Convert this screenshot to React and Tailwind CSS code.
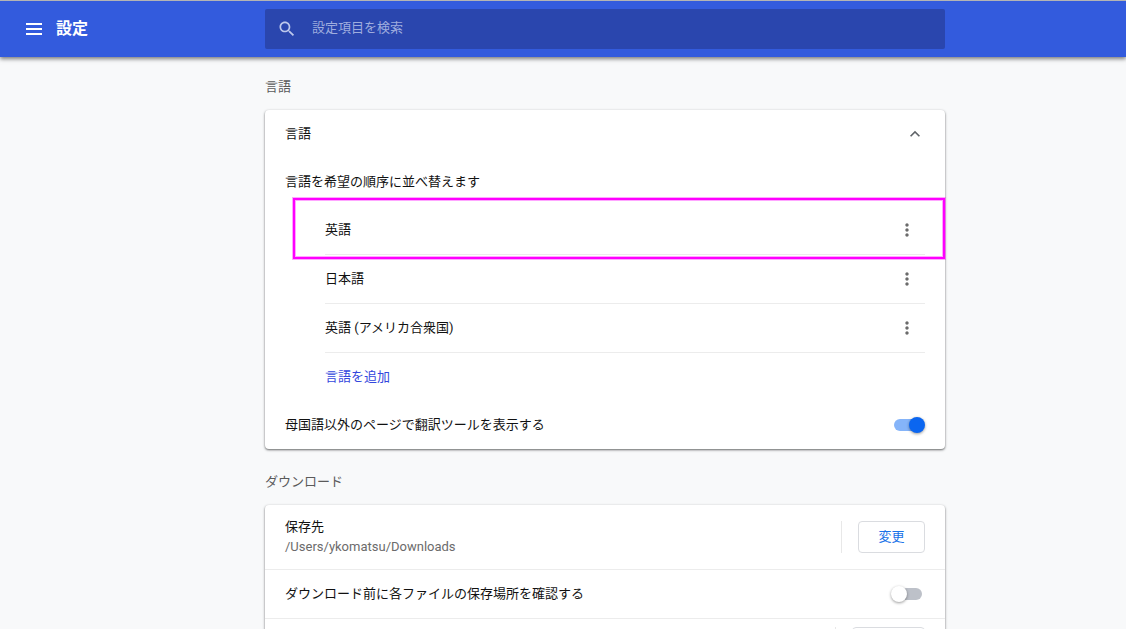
import { useState } from "react";
import clsx from "clsx";

const languages = [
    { id: "en", name: "英語", highlighted: true },
    { id: "ja", name: "日本語" },
    { id: "en-US", name: "英語 (アメリカ合衆国)" },
];

function MenuIcon() {
    return <svg viewBox="0 0 24 24" className="size-6" fill="currentColor" aria-hidden="true">
        <path d="M3 18h16v-2H3v2zm0-5h16v-2H3v2zm0-7v2h16V6H3z" />
    </svg>
}

function SearchIcon() {
    return <svg viewBox="0 0 24 24" className="size-5 shrink-0" fill="currentColor" aria-hidden="true">
        <path d="M15.5 14h-.79l-.28-.27C15.41 12.59 16 11.11 16 9.5 16 5.91 13.09 3 9.5 3S3 5.91 3 9.5 5.91 16 9.5 16c1.61 0 3.09-.59 4.23-1.57l.27.28v.79l5 4.99L20.49 19l-4.99-5zm-6 0C7.01 14 5 11.99 5 9.5S7.01 5 9.5 5 14 7.01 14 9.5 11.99 14 9.5 14z" />
    </svg>
}

function ChevronUpIcon() {
    return <svg viewBox="0 0 24 24" className="size-5" fill="currentColor" aria-hidden="true">
        <path d="M12 8l-6 6 1.41 1.41L12 10.83l4.59 4.58L18 14z" />
    </svg>
}

function MoreIcon() {
    return <svg viewBox="0 0 24 24" className="size-5" fill="currentColor" aria-hidden="true">
        <path d="M12 8c1.1 0 2-.9 2-2s-.9-2-2-2-2 .9-2 2 .9 2 2 2zm0 2c-1.1 0-2 .9-2 2s.9 2 2 2 2-.9 2-2-.9-2-2-2zm0 6c-1.1 0-2 .9-2 2s.9 2 2 2 2-.9 2-2-.9-2-2-2z" />
    </svg>
}

function Toggle({ id, checked, onChange }) {
    return <input
        id={id}
        type="checkbox"
        role="switch"
        checked={checked}
        onChange={(e) => onChange(e.target.checked)}
        className={clsx(
            "relative mr-[3px] h-3 w-7 shrink-0 cursor-pointer appearance-none rounded-full",
            "before:absolute before:-top-0.5 before:size-4 before:rounded-full before:shadow-[0_1px_3px_rgba(0,0,0,0.4)]",
            checked ? "bg-[#85b4f9] before:-right-[3px] before:bg-[#0b66f0]" : "bg-[#bdc1c9] before:-left-[3px] before:bg-white"
        )}
    />
}

function Section({ title, children }) {
    return <section>
        <h2 className="pb-[13px] text-[13px] leading-5 text-[#5a5a5a]">{title}</h2>
        <div className="rounded-sm bg-white shadow-[0_1px_3px_rgba(60,64,67,0.3),0_1px_2px_rgba(0,0,0,0.45)]">
            {children}
        </div>
    </section>
}

export default function App() {
    const [query, setQuery] = useState("");
    const [translate, setTranslate] = useState(true);
    const [askLocation, setAskLocation] = useState(false);

    return <div className="flex h-screen flex-col overflow-hidden bg-[#f8f9fa] font-[Roboto,'Noto_Sans_CJK_JP',sans-serif] text-[13px] leading-5 text-[#111]" lang="ja">
        <header className="z-10 grid h-[57px] shrink-0 grid-cols-[265px_minmax(0,680px)_1fr] items-center border-t border-[#b4b4b4] bg-[#335bdd] text-white shadow-[0_2px_4px_rgba(0,0,0,0.5)]">
            <div className="flex items-center gap-[9px] pl-[23px]">
                <button type="button" aria-label="メインメニュー"><MenuIcon /></button>
                <h1 className="text-base font-bold">設定</h1>
            </div>
            <label className="flex h-10 items-center gap-[15px] rounded-xs bg-[#2a46ae] px-3 text-[#bdc8ec]">
                <SearchIcon />
                <input
                    type="search"
                    value={query}
                    onChange={(e) => setQuery(e.target.value)}
                    placeholder="設定項目を検索"
                    aria-label="設定項目を検索"
                    className="w-full bg-transparent pb-0.5 outline-none placeholder:text-[#9fadde]"
                />
            </label>
        </header>

        <main className="grid flex-1 grid-cols-[265px_minmax(0,680px)_1fr] overflow-y-auto pt-5 [scrollbar-width:none]">
            <div className="col-start-2 flex flex-col gap-[23px]">
                <Section title="言語">
                    <button type="button" aria-expanded="true" className="flex h-12 w-full items-center justify-between px-5">
                        <span>言語</span>
                        <span className="text-[#5f6368]"><ChevronUpIcon /></span>
                    </button>
                    <p className="flex h-12 items-center px-5">言語を希望の順序に並べ替えます</p>
                    <ul className="pr-5 pl-[60px]">
                        {languages.map((language) => (
                            <li key={language.id} className="relative flex h-[49px] items-center justify-between border-b border-[#ececec]">
                                <span>{language.name}</span>
                                <button type="button" aria-label={`${language.name} その他の操作`} className="mr-2 text-[#6b6b6b]"><MoreIcon /></button>
                                {language.highlighted && <span className="pointer-events-none absolute -top-2 -right-5 -bottom-[5px] -left-8 border-2 border-[#ff00ff] shadow-[0_0_0_1px_rgba(255,0,255,0.35),inset_0_0_0_1px_rgba(255,0,255,0.35)]" />}
                            </li>
                        ))}
                    </ul>
                    <div className="flex h-12 items-center pl-[60px]">
                        <button type="button" className="text-[#3347dd]">言語を追加</button>
                    </div>
                    <div className="flex h-12 items-center justify-between px-5">
                        <label htmlFor="translate">母国語以外のページで翻訳ツールを表示する</label>
                        <Toggle id="translate" checked={translate} onChange={setTranslate} />
                    </div>
                </Section>

                <Section title="ダウンロード">
                    <div className="flex h-16 items-center justify-between px-5">
                        <div>
                            <p>保存先</p>
                            <p className="text-[#6b6b6b]">/Users/ykomatsu/Downloads</p>
                        </div>
                        <div className="flex h-8 border-l border-[#e8e8e8] pl-4">
                            <button type="button" className="w-[67px] rounded-sm border border-[#dadce0] text-[#1a73e8]">変更</button>
                        </div>
                    </div>
                    <div className="flex h-[49px] items-center justify-between border-t border-[#ececec] px-5">
                        <label htmlFor="ask-location">ダウンロード前に各ファイルの保存場所を確認する</label>
                        <Toggle id="ask-location" checked={askLocation} onChange={setAskLocation} />
                    </div>
                    <div className="flex h-[49px] items-center justify-end border-t border-[#ececec] px-5">
                        <div className="flex h-8 border-l border-[#e8e8e8] pl-4">
                            <button type="button" aria-label="クリア" className="w-[73px] rounded-sm border border-[#dadce0]" />
                        </div>
                    </div>
                </Section>
            </div>
        </main>
    </div>
}
